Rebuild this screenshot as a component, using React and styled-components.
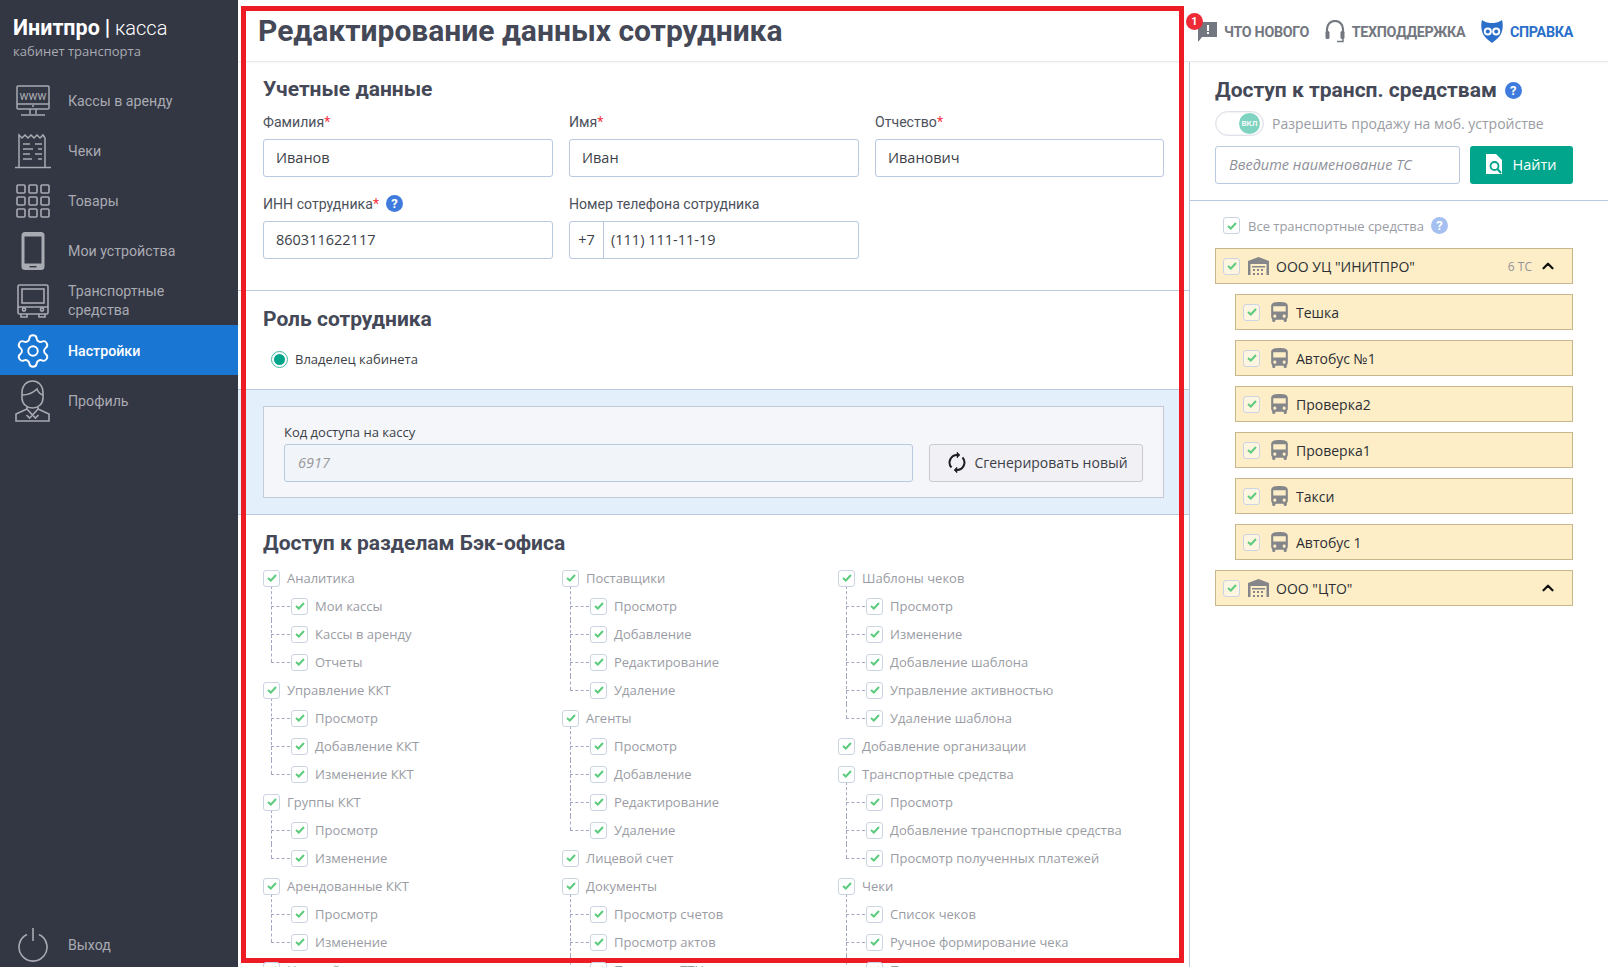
import React from 'react'
import styled, { createGlobalStyle } from 'styled-components'
import { ChevronUp, Settings } from 'lucide-react'
import { MdDirectionsBus } from 'react-icons/md'

const Global = createGlobalStyle`
  html, body { margin: 0; padding: 0; height: 100%; background: #fff; overflow: hidden; }
  * { box-sizing: border-box; }
  body { font-family: "Open Sans", "Liberation Sans", sans-serif; }
`

const Page = styled.div`
  position: relative;
  display: flex;
  width: 1608px;
  height: 967px;
  overflow: hidden;
`

const Sidebar = styled.aside`
  width: 238px;
  flex: none;
  display: flex;
  flex-direction: column;
  background: #333643;
  color: #a9abb2;
`

const Logo = styled.div`
  height: 75px;
  padding: 14px 0 0 13px;
`

const LogoName = styled.div`
  font-family: Roboto, sans-serif;
  font-size: 20px;
  font-weight: 300;
  line-height: 27px;
  color: #fff;
  b { font-size: 21.5px; font-weight: 700; }
`

const LogoSub = styled.div`
  font-size: 13px;
  line-height: 18px;
  color: #a9abb2;
`

const NavList = styled.nav`
  display: flex;
  flex-direction: column;
  flex: 1;
`

const NavItem = styled.div`
  height: 50px;
  flex: none;
  display: flex;
  align-items: center;
  padding-top: 2px;
  font-family: Roboto, sans-serif;
  font-size: 14.2px;
  font-weight: ${p => (p.$active ? 500 : 400)};
  line-height: 19px;
  color: ${p => (p.$active ? '#fff' : '#a9abb2')};
  background: ${p => (p.$active ? '#1976d2' : 'transparent')};
`

const NavIcon = styled.span`
  width: 68px;
  flex: none;
  display: flex;
  justify-content: center;
  padding-right: 3px;
  margin-top: -1px;
  color: inherit;
`

const LogoutItem = styled(NavItem)`
  margin-top: auto;
  height: 46px;
`

const Content = styled.div`
  flex: 1;
  display: flex;
  flex-direction: column;
  min-width: 0;
`

const TopBar = styled.header`
  height: 62px;
  flex: none;
  display: flex;
  border-bottom: 1px solid #e8e9ec;
  box-shadow: 0 1px 2px rgba(0, 0, 0, 0.04);
`

const PageTitle = styled.h1`
  width: 951px;
  margin: 0;
  padding: 11px 0 0 20px;
  font-family: Roboto, sans-serif;
  font-size: 30px;
  line-height: 40px;
  font-weight: 700;
  color: #444857;
`

const TopLinks = styled.div`
  flex: 1;
  display: flex;
  align-items: center;
  padding: 2px 35px 0 8px;
  justify-content: space-between;
`

const TopLink = styled.a`
  position: relative;
  display: flex;
  align-items: center;
  gap: 7px;
  font-family: Roboto, sans-serif;
  font-size: 14.3px;
  font-weight: 700;
  letter-spacing: -0.3px;
  color: ${p => (p.$blue ? '#2a6fc9' : '#737780')};
`

const Badge = styled.span`
  position: absolute;
  left: -11px;
  top: -9px;
  width: 17px;
  height: 17px;
  border-radius: 50%;
  background: #ee2a36;
  color: #fff;
  font-size: 11px;
  font-weight: 700;
  line-height: 17px;
  text-align: center;
  letter-spacing: 0;
`

const Body = styled.div`
  flex: 1;
  display: flex;
  min-height: 0;
`

const Main = styled.main`
  width: 951px;
  flex: none;
  overflow: hidden;
`

const Section = styled.section`
  padding: ${p => p.$pad || '15px 25px 0'};
  height: ${p => p.$h}px;
  border-bottom: ${p => (p.$noLine ? 'none' : '1px solid #b9c9e0')};
  background: ${p => p.$bg || 'transparent'};
`

const SectionTitle = styled.h2`
  margin: 0;
  font-family: Roboto, sans-serif;
  font-size: 21px;
  line-height: 26px;
  font-weight: 700;
  color: #444857;
`

const FormGrid = styled.div`
  display: grid;
  grid-template-columns: 290px 290px 1fr;
  column-gap: 16px;
  row-gap: 16px;
  margin-top: 9px;
`

const Label = styled.label`
  display: flex;
  align-items: center;
  height: 20px;
  margin-bottom: 8px;
  padding-top: 1px;
  font-family: Roboto, sans-serif;
  font-size: 14.1px;
  color: #4d515c;
  i { color: #f5333f; font-style: normal; }
`

const Help = styled.span`
  display: inline-block;
  width: 17px;
  height: 17px;
  margin-left: ${p => p.$gap ?? 7}px;
  border-radius: 50%;
  background: ${p => (p.$light ? '#a5bff0' : '#3f7bdc')};
  color: #fff;
  font-family: Roboto, sans-serif;
  font-size: 13px;
  font-weight: 700;
  line-height: 17px;
  text-align: center;
  flex: none;
`

const Field = styled.div`
  height: 38px;
  display: flex;
  align-items: center;
  padding: 0 12px 2px;
  border: 1px solid #b9c9e0;
  border-radius: 3px;
  font-size: 14.5px;
  color: #3c3f48;
  background: #fff;
`

const PhoneField = styled(Field)`
  padding: 0;
`

const PhonePrefix = styled.span`
  width: 34px;
  height: 100%;
  display: flex;
  align-items: center;
  justify-content: center;
  padding-bottom: 2px;
  border-right: 1px solid #b9c9e0;
`

const PhoneValue = styled.span`
  padding: 0 0 2px 7px;
`

const RoleRow = styled.div`
  display: flex;
  align-items: center;
  gap: 7px;
  margin: 18px 0 0 8px;
  font-size: 13px;
  color: #3c3f48;
`

const Radio = styled.span`
  width: 17px;
  height: 17px;
  border-radius: 50%;
  border: 1px solid #3fb8a6;
  display: flex;
  align-items: center;
  justify-content: center;
  &::after {
    content: '';
    width: 11px;
    height: 11px;
    border-radius: 50%;
    background: #00a58c;
  }
`

const CodeBox = styled.div`
  height: 92px;
  display: grid;
  grid-template-columns: 1fr 214px;
  column-gap: 16px;
  align-items: end;
  padding: 0 20px 15px;
  background: #f4f6fa;
  border: 1px solid #c5cbd5;
`

const CodeField = styled.div`
  display: flex;
  flex-direction: column;
`

const CodeLabel = styled.span`
  font-size: 13px;
  line-height: 18px;
  margin-bottom: 3px;
  color: #3c3f48;
`

const CodeInput = styled(Field)`
  padding-left: 13px;
  background: #f1f4f9;
  font-style: italic;
  color: #999;
`

const GenButton = styled.button`
  height: 38px;
  display: flex;
  align-items: center;
  justify-content: center;
  gap: 8px;
  padding: 0 0 2px 4px;
  font-family: "Open Sans", sans-serif;
  font-size: 14px;
  color: #3c3f48;
  background: #f1f1f5;
  border: 1px solid #c9cbd2;
  border-radius: 3px;
`

const TreeGrid = styled.div`
  display: grid;
  grid-template-columns: 299px 276px 1fr;
  margin-top: 8px;
`

const TreeRow = styled.div`
  position: relative;
  height: 28px;
  display: flex;
  align-items: center;
  gap: 7px;
  padding-left: ${p => (p.$child ? 28 : 0)}px;
  font-size: 13px;
  color: #9a9ca4;
  white-space: nowrap;

  ${p => p.$child && `
    &::before {
      content: '';
      position: absolute;
      left: 8px;
      top: ${p.$first ? -6 : 0}px;
      height: ${p.$last ? (p.$first ? 20 : 14) : 28 + (p.$first ? 6 : 0)}px;
      border-left: 1px dashed #a2a7c2;
    }
    &::after {
      content: '';
      position: absolute;
      left: 8px;
      width: 19px;
      top: 14px;
      border-top: 1px dashed #a2a7c2;
    }
  `}
`

const Box = styled.span`
  position: relative;
  z-index: 1;
  width: 17px;
  height: 17px;
  flex: none;
  display: flex;
  align-items: center;
  justify-content: center;
  border: 1px solid #ccd3e2;
  border-radius: 3px;
  background: ${p => p.$bg || '#fff'};
`

const Side = styled.aside`
  flex: 1;
  border-left: 1px solid #b9c9e0;
  min-width: 0;
`

const SideHead = styled.div`
  height: 139px;
  padding: 15px 35px 0 25px;
  border-bottom: 1px solid #b9c9e0;
`

const SideTitle = styled(SectionTitle)`
  display: flex;
  align-items: center;
`

const ToggleRow = styled.div`
  display: flex;
  align-items: center;
  gap: 8px;
  margin-top: 8px;
  font-size: 14px;
  color: #9a9ca4;
`

const Toggle = styled.span`
  width: 49px;
  height: 25px;
  flex: none;
  display: flex;
  align-items: center;
  justify-content: flex-end;
  padding-right: 3px;
  border: 1px solid #dde1ea;
  border-radius: 13px;
  background: #fff;
  box-shadow: inset 0 0 2px rgba(0, 0, 0, 0.15);
`

const Knob = styled.span`
  width: 21px;
  height: 21px;
  border-radius: 50%;
  background: #7fd3c1;
  color: #fff;
  font-family: Roboto, sans-serif;
  font-size: 8px;
  font-weight: 500;
  line-height: 21px;
  text-align: center;
`

const SearchRow = styled.div`
  display: grid;
  grid-template-columns: 245px 103px;
  column-gap: 10px;
  margin-top: 10px;
`

const SearchInput = styled(Field)`
  padding-left: 13px;
  font-size: 14.5px;
  font-style: italic;
  color: #8e9099;
`

const FindButton = styled.button`
  height: 38px;
  display: flex;
  align-items: center;
  justify-content: center;
  gap: 9px;
  padding: 0 0 2px;
  font-family: "Open Sans", sans-serif;
  font-size: 14.5px;
  color: #fff;
  background: #00a58c;
  border: none;
  border-radius: 3px;
`

const SideList = styled.div`
  padding: 0 35px 0 25px;
`

const AllRow = styled.div`
  height: 47px;
  display: flex;
  align-items: center;
  gap: 8px;
  padding: 2px 0 0 8px;
  font-size: 13px;
  color: #9a9ca4;
`

const Org = styled.div`
  height: 36px;
  display: flex;
  align-items: center;
  gap: 7px;
  margin-left: ${p => (p.$bus ? 20 : 0)}px;
  margin-bottom: 10px;
  padding: 0 15px 0 7px;
  background: #fdeec7;
  border: 1px solid #c8b78a;
  font-size: 14px;
  color: #2c2e35;
`

const OrgCount = styled.span`
  margin-left: auto;
  font-size: 12px;
  color: #92939a;
`

const OrgChevron = styled.span`
  display: flex;
  margin-left: ${p => (p.$auto ? 'auto' : 0)};
`

const BusName = styled.span`
  margin-left: -3px;
`

const FrameMark = styled.div`
  position: absolute;
  left: 241px;
  top: 6px;
  width: 943px;
  height: 957px;
  border: 5px solid #ed1c24;
  pointer-events: none;
`

const Check = () => (
  <svg width="10" height="8" viewBox="0 0 10 8">
    <path d="M1 4 L3.800 6.500 L9 1" fill="none" stroke="#5ecb7f" strokeWidth="2" />
  </svg>
)

const WwwIcon = () => (
  <svg width="34" height="32" viewBox="0 0 34 32" fill="none" stroke="currentColor" strokeWidth="1.5">
    <rect x="1" y="1" width="32" height="23" rx="1" />
    <path d="M1 19h32M17 20v2M14 24v5M20 24v5M5 30h24" />
    <text x="17" y="14.500" textAnchor="middle" fontFamily="Roboto, sans-serif" fontSize="12" fill="currentColor" stroke="none">www</text>
  </svg>
)

const ReceiptIcon = () => (
  <svg width="38" height="36" viewBox="0 0 38 36" fill="none" stroke="currentColor" strokeWidth="1.5">
    <path d="M5 34V2l3 3 3-3 3 3 3-3 3 3 3-3 3 3 3-3 2 3v29M1 34.500h36" />
    <path d="M9 11h7M21 11h7M9 16h10M24 16h4M9 21h7M21 21h7M9 26h9M24 26h4" />
  </svg>
)

const GridIcon = () => (
  <svg width="34" height="34" viewBox="0 0 34 34" fill="none" stroke="currentColor" strokeWidth="1.6">
    {[1, 13, 25].map(y => [1, 13, 25].map(x => (
      <rect key={x + '-' + y} x={x} y={y} width="8" height="8" rx="1" />
    )))}
  </svg>
)

const PhoneIcon = () => (
  <svg width="24" height="38" viewBox="0 0 24 38">
    <rect x="0.500" y="0" width="23" height="38" rx="3.500" fill="currentColor" />
    <rect x="3.500" y="4.500" width="17" height="27" fill="#333643" />
    <rect x="8.500" y="34" width="7" height="1.400" fill="#333643" />
  </svg>
)

const BusOutlineIcon = () => (
  <svg width="32" height="34" viewBox="0 0 32 34" fill="none" stroke="currentColor" strokeWidth="1.6">
    <rect x="1" y="1" width="30" height="29" rx="1.500" />
    <rect x="5" y="5" width="22" height="14" />
    <path d="M1 23h30M4 30v3h6v-3M22 30v3h6v-3" />
    <circle cx="7" cy="25.500" r="1.600" />
    <circle cx="25" cy="25.500" r="1.600" />
  </svg>
)

const PersonIcon = () => (
  <svg width="37" height="42" viewBox="0 0 37 42" fill="none" stroke="currentColor" strokeWidth="1.6">
    <path d="M8 13c0-8 5-12 10.500-12S29 5 29 13v5c0 6-5 10-10.500 10S8 24 8 18z" />
    <path d="M8 15c6 0 11-2 15-6 1 3 3 5 6 6" />
    <path d="M13 27v2L2 34v7h33v-7l-11-5v-2" />
    <path d="M13 29l5.500 6 5.500-6M18.500 35l-3 3-3-3M18.500 35l3 3 3-3" />
  </svg>
)

const PowerIcon = () => (
  <svg width="30" height="35" viewBox="0 0 30 35" fill="none" stroke="currentColor" strokeWidth="1.600">
    <path d="M15 1v13" />
    <path d="M9 7.500a14 14 0 1 0 12 0" />
  </svg>
)

const BubbleIcon = () => (
  <svg width="20" height="20" viewBox="0 0 20 20">
    <path d="M1 0h19v15H5l-4 5z" fill="#737780" />
    <rect x="10" y="3" width="2" height="6" fill="#fff" />
    <rect x="10" y="10" width="2" height="2" fill="#fff" />
  </svg>
)

const HeadsetIcon = () => (
  <svg width="20" height="23" viewBox="0 0 20 23" fill="none" stroke="#737780">
    <path d="M2 13V9a8 8 0 0 1 16 0v4" strokeWidth="2.200" />
    <rect x="0.500" y="11" width="4" height="8" rx="1.500" fill="#737780" strokeWidth="0" />
    <rect x="15.500" y="11" width="4" height="8" rx="1.500" fill="#737780" strokeWidth="0" />
    <path d="M18 19v2.500h-6" strokeWidth="1.500" />
  </svg>
)

const OwlIcon = () => (
  <svg width="22" height="23" viewBox="0 0 22 23">
    <path d="M1 0c3 2 5 3 10 3s7-1 10-3c1 3 1 8 0 11-1 5-5 8-10 12C6 19 2 16 1 11 0 8 0 3 1 0z" fill="#2a6fc9" />
    <circle cx="6.800" cy="11.500" r="4" fill="#fff" />
    <circle cx="15.200" cy="11.500" r="4" fill="#fff" />
    <circle cx="6.800" cy="11.500" r="2" fill="#2a6fc9" />
    <circle cx="15.200" cy="11.500" r="2" fill="#2a6fc9" />
  </svg>
)

const RefreshIcon = () => (
  <svg width="18" height="21" viewBox="0 0 18 21" fill="none" stroke="#1d1f24" strokeWidth="2">
    <path d="M3.500 15.500A7.500 7.500 0 0 1 9 3h1" />
    <path d="M14.500 5.500A7.500 7.500 0 0 1 9 18H8" />
    <path d="M9 0l3 3-3 3z" fill="#1d1f24" strokeWidth="0.500" />
    <path d="M9 15l-3 3 3 3z" fill="#1d1f24" strokeWidth="0.500" />
  </svg>
)

const FindIcon = () => (
  <svg width="17" height="20" viewBox="0 0 17 20">
    <path d="M0 0h10l6 6v14H0z" fill="#fff" />
    <circle cx="8.500" cy="12" r="4" fill="none" stroke="#00a58c" strokeWidth="1.800" />
    <path d="M11.500 15l3.500 4" stroke="#00a58c" strokeWidth="2" />
  </svg>
)

const WarehouseSvg = styled.svg`
  margin-left: 1px;
`

const WarehouseIcon = () => (
  <WarehouseSvg width="21" height="18" viewBox="0 0 21 18">
    <path d="M10.500 0L21 4v14h-2.500V7h-16v11H0V4z" fill="#85868a" />
    <rect x="4" y="9" width="13" height="1.500" fill="#85868a" />
    <path d="M5 12h2v2H5zM9 12h2v2H9zM13 12h2v2h-2zM5 16h2v2H5zM9 16h2v2H9zM13 16h2v2h-2z" fill="#85868a" />
  </WarehouseSvg>
)

const navItems = [
  { label: 'Кассы в аренду', icon: <WwwIcon /> },
  { label: 'Чеки', icon: <ReceiptIcon /> },
  { label: 'Товары', icon: <GridIcon /> },
  { label: 'Мои устройства', icon: <PhoneIcon /> },
  { label: <>Транспортные<br />средства</>, icon: <BusOutlineIcon /> },
  { label: 'Настройки', icon: <Settings size={38} strokeWidth={1.2} />, active: true },
  { label: 'Профиль', icon: <PersonIcon /> },
]

const treeColumns = [
  [
    ['Аналитика', ['Мои кассы', 'Кассы в аренду', 'Отчеты']],
    ['Управление ККТ', ['Просмотр', 'Добавление ККТ', 'Изменение ККТ']],
    ['Группы ККТ', ['Просмотр', 'Изменение']],
    ['Арендованные ККТ', ['Просмотр', 'Изменение']],
    ['Настройки', []],
  ],
  [
    ['Поставщики', ['Просмотр', 'Добавление', 'Редактирование', 'Удаление']],
    ['Агенты', ['Просмотр', 'Добавление', 'Редактирование', 'Удаление']],
    ['Лицевой счет', []],
    ['Документы', ['Просмотр счетов', 'Просмотр актов', 'Просмотр ТТН']],
  ],
  [
    ['Шаблоны чеков', ['Просмотр', 'Изменение', 'Добавление шаблона', 'Управление активностью', 'Удаление шаблона']],
    ['Добавление организации', []],
    ['Транспортные средства', ['Просмотр', 'Добавление транспортные средства', 'Просмотр полученных платежей']],
    ['Чеки', ['Список чеков', 'Ручное формирование чека', 'Просмотр чека']],
  ],
]

const vehicles = ['Тешка', 'Автобус №1', 'Проверка2', 'Проверка1', 'Такси', 'Автобус 1']

const TreeColumn = ({ groups }) => (
  <div>
    {groups.map(([title, children], g) => (
      <React.Fragment key={g}>
        <TreeRow>
          <Box><Check /></Box>
          {title}
        </TreeRow>
        {children.map((child, i) => (
          <TreeRow key={i} $child $first={i === 0} $last={i === children.length - 1}>
            <Box><Check /></Box>
            {child}
          </TreeRow>
        ))}
      </React.Fragment>
    ))}
  </div>
)

export default function App() {
  return (
    <Page>
      <Global />
      <Sidebar>
        <Logo>
          <LogoName><b>Инитпро</b> <b>|</b> касса</LogoName>
          <LogoSub>кабинет транспорта</LogoSub>
        </Logo>
        <NavList>
          {navItems.map((item, i) => (
            <NavItem key={i} $active={item.active}>
              <NavIcon>{item.icon}</NavIcon>
              <span>{item.label}</span>
            </NavItem>
          ))}
          <LogoutItem>
            <NavIcon><PowerIcon /></NavIcon>
            <span>Выход</span>
          </LogoutItem>
        </NavList>
      </Sidebar>

      <Content>
        <TopBar>
          <PageTitle>Редактирование данных сотрудника</PageTitle>
          <TopLinks>
            <TopLink>
              <Badge>1</Badge>
              <BubbleIcon />
              ЧТО НОВОГО
            </TopLink>
            <TopLink><HeadsetIcon />ТЕХПОДДЕРЖКА</TopLink>
            <TopLink $blue><OwlIcon />СПРАВКА</TopLink>
          </TopLinks>
        </TopBar>

        <Body>
          <Main>
            <Section $h={229} $pad="14px 25px 0">
              <SectionTitle>Учетные данные</SectionTitle>
              <FormGrid>
                <div>
                  <Label>Фамилия<i>*</i></Label>
                  <Field>Иванов</Field>
                </div>
                <div>
                  <Label>Имя<i>*</i></Label>
                  <Field>Иван</Field>
                </div>
                <div>
                  <Label>Отчество<i>*</i></Label>
                  <Field>Иванович</Field>
                </div>
                <div>
                  <Label>ИНН сотрудника<i>*</i><Help>?</Help></Label>
                  <Field>860311622117</Field>
                </div>
                <div>
                  <Label>Номер телефона сотрудника</Label>
                  <PhoneField>
                    <PhonePrefix>+7</PhonePrefix>
                    <PhoneValue>(111) 111-11-19</PhoneValue>
                  </PhoneField>
                </div>
              </FormGrid>
            </Section>

            <Section $h={99} $pad="15px 25px 0">
              <SectionTitle>Роль сотрудника</SectionTitle>
              <RoleRow><Radio />Владелец кабинета</RoleRow>
            </Section>

            <Section $h={125} $pad="16px 25px 0" $bg="#e3f0fc">
              <CodeBox>
                <CodeField>
                  <CodeLabel>Код доступа на кассу</CodeLabel>
                  <CodeInput>6917</CodeInput>
                </CodeField>
                <GenButton><RefreshIcon />Сгенерировать новый</GenButton>
              </CodeBox>
            </Section>

            <Section $h={460} $pad="15px 25px 0" $noLine>
              <SectionTitle>Доступ к разделам Бэк-офиса</SectionTitle>
              <TreeGrid>
                {treeColumns.map((groups, i) => <TreeColumn key={i} groups={groups} />)}
              </TreeGrid>
            </Section>
          </Main>

          <Side>
            <SideHead>
              <SideTitle>Доступ к трансп. средствам<Help $gap={8}>?</Help></SideTitle>
              <ToggleRow>
                <Toggle><Knob>ВКЛ</Knob></Toggle>
                Разрешить продажу на моб. устройстве
              </ToggleRow>
              <SearchRow>
                <SearchInput>Введите наименование ТС</SearchInput>
                <FindButton><FindIcon />Найти</FindButton>
              </SearchRow>
            </SideHead>
            <SideList>
              <AllRow>
                <Box><Check /></Box>
                Все транспортные средства
                <Help $light $gap={-1}>?</Help>
              </AllRow>
              <Org>
                <Box $bg="#fdf5df"><Check /></Box>
                <WarehouseIcon />
                ООО УЦ "ИНИТПРО"
                <OrgCount>6 ТС</OrgCount>
                <OrgChevron><ChevronUp size={18} strokeWidth={3} color="#111" /></OrgChevron>
              </Org>
              {vehicles.map(name => (
                <Org key={name} $bus>
                  <Box $bg="#fdf5df"><Check /></Box>
                  <MdDirectionsBus size={25} color="#85868a" />
                  <BusName>{name}</BusName>
                </Org>
              ))}
              <Org>
                <Box $bg="#fdf5df"><Check /></Box>
                <WarehouseIcon />
                ООО "ЦТО"
                <OrgChevron $auto><ChevronUp size={18} strokeWidth={3} color="#111" /></OrgChevron>
              </Org>
            </SideList>
          </Side>
        </Body>
      </Content>

      <FrameMark />
    </Page>
  )
}
